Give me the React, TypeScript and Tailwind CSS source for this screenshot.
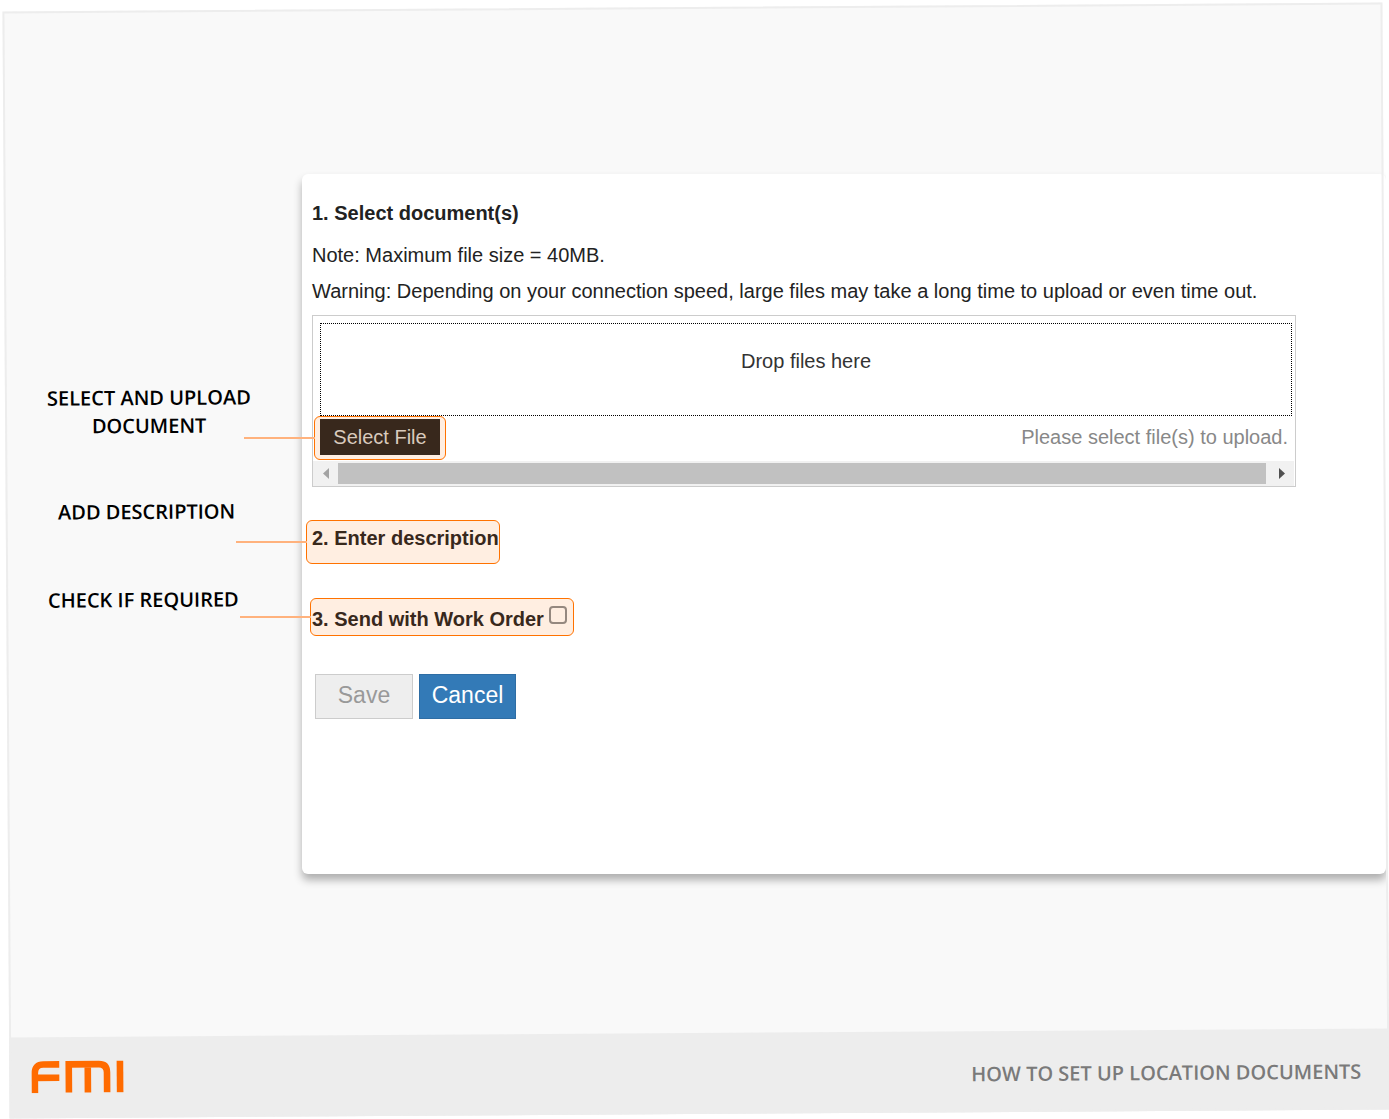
import { useState, type ReactNode } from "react";

// ── Callout ───────────────────────────────────────────────────────────────────

interface CalloutProps {
  className?: string;
  children: ReactNode;
}

// Orange highlight box with a leader line that runs back to its label
function Callout({ className = "", children }: CalloutProps) {
  return (
    <div className={`relative rounded-md border border-[#ff7200] bg-[#ffeee1] ${className}`}>
      <span className="absolute right-full top-1/2 h-0.5 w-[71px] -translate-y-px bg-[#ffb27d]" />
      {children}
    </div>
  );
}

// ── Logo ──────────────────────────────────────────────────────────────────────

function Logo() {
  return (
    <svg
      width="93"
      height="33"
      viewBox="0 0 93 33"
      fill="none"
      stroke="#ff6b00"
      strokeWidth="6.6"
      role="img"
      aria-label="FMI"
    >
      <path d="M3.5 33V13Q3.5 4.3 12 4.3H28M3.5 17.6H28" />
      <path d="M37.5 32.5V4.3H67.5Q75.7 4.3 75.7 12.5V32.5M56.5 4.3V32.5" />
      <path d="M88.7 1V32.5" />
    </svg>
  );
}

// ── Upload box ────────────────────────────────────────────────────────────────

function UploadBox() {
  return (
    <div className="mt-2.5 border border-[#cccccc] pt-[7px]">
      <div className="ml-[7px] mr-[3px] flex h-[93px] justify-center border border-dotted border-black pt-[23px] text-[#333333]">
        Drop files here
      </div>

      <div className="flex items-start justify-between pl-px pr-[7px]">
        <Callout className="px-[5px] pb-1 pt-0.5">
          <button type="button" className="block h-9 w-[120px] bg-[#38281c] text-[#d9cabd]">
            Select File
          </button>
        </Callout>
        <span className="pt-[7px] text-[#888888]">Please select file(s) to upload.</span>
      </div>

      {/* Horizontal scrollbar */}
      <div className="mr-px mt-px flex h-[25px] items-center bg-[#f1f1f1]">
        <span className="flex w-[25px] justify-center">
          <svg width="6" height="11" viewBox="0 0 6 11" fill="#a3a3a3">
            <path d="M6 0v11L0 5.5z" />
          </svg>
        </span>
        <span className="h-[21px] flex-1 bg-[#c1c1c1]" />
        <span className="flex w-7 justify-center pl-1">
          <svg width="6" height="11" viewBox="0 0 6 11" fill="#505050">
            <path d="M0 0v11l6-5.5z" />
          </svg>
        </span>
      </div>
    </div>
  );
}

// ── Page ──────────────────────────────────────────────────────────────────────

export default function App() {
  const [sendWithOrder, setSendWithOrder] = useState(false);

  return (
    <div className="grid min-h-screen overflow-hidden bg-white">
      {/* Tilted slide with its footer */}
      <div className="[grid-area:1/1] mb-[5px] ml-1.5 mr-[3px] mt-[7px] flex rotate-[-0.37deg] flex-col justify-end bg-[#f9f9f9]">
        <footer className="flex h-[81px] items-center justify-between bg-[#ededed] pb-0.5 pl-[22px] pr-7">
          <Logo />
          <p className="pt-1.5 font-['Open_Sans',sans-serif] text-[20px] font-semibold leading-7 text-[#7a7a7a]">
            HOW TO SET UP LOCATION DOCUMENTS
          </p>
        </footer>
      </div>

      {/* Labels and form */}
      <main className="[grid-area:1/1] z-10 mr-[3px] grid grid-cols-[302px_1fr] items-start overflow-x-clip">
        <div className="flex flex-col items-center pr-1 pt-[384px] text-center font-['Open_Sans',sans-serif] text-[20px] font-semibold leading-7 text-black">
          <p className="w-56 rotate-[-0.37deg]">SELECT AND UPLOAD DOCUMENT</p>
          <p className="mt-[58px] rotate-[-0.37deg] pr-1">ADD DESCRIPTION</p>
          <p className="mt-[60px] rotate-[-0.37deg] pr-3">CHECK IF REQUIRED</p>
        </div>

        <form
          onSubmit={(e) => e.preventDefault()}
          className="mt-[174px] min-h-[700px] rounded-md bg-white pb-10 pl-2.5 pr-[90px] pt-[25px] font-['Liberation_Sans',Arial,sans-serif] text-[20px] leading-7 text-[#222222] shadow-[0_6px_8px_rgba(0,0,0,0.3)]"
        >
          <h2 className="font-bold">1. Select document(s)</h2>
          <p className="mt-3.5">Note: Maximum file size = 40MB.</p>
          <p className="mt-2">
            Warning: Depending on your connection speed, large files may take a long time to upload or even
            time out.
          </p>

          <UploadBox />

          <Callout className="-ml-1.5 mt-[33px] h-11 w-[194px] pl-[5px] pt-[3px]">
            <h2 className="whitespace-nowrap font-bold text-[#38281c]">2. Enter description</h2>
          </Callout>

          <Callout className="-ml-0.5 mt-[34px] h-[38px] w-[264px] pl-px pr-1.5">
            <label className="flex justify-between whitespace-nowrap font-bold text-[#38281c]">
              <span className="pt-1.5">3. Send with Work Order</span>
              <input
                type="checkbox"
                checked={sendWithOrder}
                onChange={(e) => setSendWithOrder(e.target.checked)}
                className="mt-[7px] size-[18px] shrink-0 appearance-none rounded border-2 border-[#95887f] checked:bg-[#95887f]"
              />
            </label>
          </Callout>

          <div className="mt-[38px] flex gap-1.5 pl-[3px] text-[23px]">
            <button
              type="button"
              disabled
              className="h-[45px] w-[98px] border border-[#cccccc] bg-[#eeeeee] pb-1 text-[#999999]"
            >
              Save
            </button>
            <button type="button" className="h-[45px] w-[97px] border border-[#2e6da4] bg-[#337ab7] pb-1 text-white">
              Cancel
            </button>
          </div>
        </form>
      </main>

      {/* Slide edge, above the form so that it stays visible on the right */}
      <div className="pointer-events-none [grid-area:1/1] z-20 mb-[5px] ml-1.5 mr-[3px] mt-[7px] rotate-[-0.37deg] border-2 border-[#ededed]" />
    </div>
  );
}
